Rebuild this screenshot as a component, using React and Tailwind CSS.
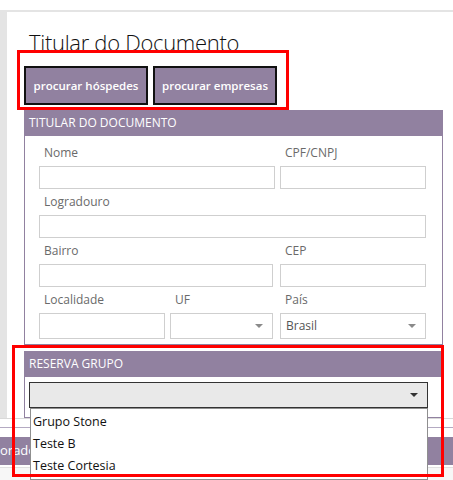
import React from 'react';

const purple = 'bg-[#9181a0]';

function Field({ label, width, children, tall }) {
  return (
    <div className={`flex flex-col ${width}`}>
      <div className="h-[26px] flex items-center pl-[5px] text-[12px] text-[#6a6a6a]">{label}</div>
      <div className={`${tall ? 'h-[26px]' : 'h-[23px]'} border border-[#cfcfcf] bg-white relative flex items-center`}>
        {children}
      </div>
    </div>
  );
}

function Caret({ className }) {
  return (
    <svg width="8" height="4" viewBox="0 0 8 4" className={className}>
      <path d="M0 0 L8 0 L4 4 Z" fill="currentColor" />
    </svg>
  );
}

export default function App() {
  return (
    <div className="w-[453px] h-[480px] bg-white overflow-hidden relative font-['Open_Sans','Noto_Sans',sans-serif]">
      <div className="h-[10px]" />

      {/* modal */}
      <div className="h-[408px] border-t-2 border-[#e4e4e4] flex">
        <div className="w-[7px] bg-[#e4e4e4]" />
        <div className="flex-1 pl-[17px]">
          <h1 className="ml-[5px] mt-[17px] text-[22px] leading-[26px] font-light text-[#111] tracking-[-0.3px]">
            Titular do Documento
          </h1>

          <div className="mt-[11px] flex gap-[5px]">
            <button className={`w-[124px] h-[39px] border-2 border-[#111] ${purple} text-white text-[11.5px] font-semibold`}>
              procurar hóspedes
            </button>
            <button className={`w-[124px] h-[39px] border-2 border-[#111] ${purple} text-white text-[11.5px] font-semibold`}>
              procurar empresas
            </button>
          </div>

          {/* Titular panel */}
          <div className="mt-[5px] w-[419px]">
            <div className={`h-[26px] ${purple} flex items-center pl-[5px] text-[12px] text-white`}>
              TITULAR DO DOCUMENTO
            </div>
            <div className="h-[209px] border-x border-b border-[#9181a0] pl-[14px] pt-[4px]">
              <div className="flex gap-[5px]">
                <Field label="Nome" width="w-[236px]" />
                <Field label="CPF/CNPJ" width="w-[146px]" />
              </div>
              <div className="flex">
                <Field label="Logradouro" width="w-[387px]" />
              </div>
              <div className="flex gap-[7px]">
                <Field label="Bairro" width="w-[234px]" />
                <Field label="CEP" width="w-[146px]" />
              </div>
              <div className="flex">
                <Field label="Localidade" width="w-[126px]" tall />
                <div className="w-[5px]" />
                <Field label="UF" width="w-[103px]" tall>
                  <Caret className="absolute right-[9px] text-[#8a8a8a]" />
                </Field>
                <div className="w-[7px]" />
                <Field label="País" width="w-[146px]" tall>
                  <span className="pl-[5px] text-[12px] text-[#555]">Brasil</span>
                  <Caret className="absolute right-[9px] text-[#8a8a8a]" />
                </Field>
              </div>
            </div>
          </div>

          {/* Reserva grupo panel */}
          <div className="mt-[6px] w-[419px]">
            <div className={`h-[26px] ${purple} flex items-center pl-[5px] text-[12px] text-white`}>
              RESERVA GRUPO
            </div>
            <div className="h-[41px] border-x border-b border-[#9181a0] pl-[4px] pt-[5px]">
              <div className="w-[399px] h-[26px] border border-[#333] bg-[#e9e9e9] flex items-center justify-end pr-[9px]">
                <Caret className="text-[#333]" />
              </div>
            </div>
          </div>
        </div>
      </div>

      {/* page behind the modal */}
      <div className="h-px bg-[#d9d9d9]" />
      <div className="h-[8px]" />
      <div className="h-px bg-[#b4aac2]" />
      <div className="h-[9px]" />
      <div className={`h-[28px] ${purple} flex items-center text-[13px] text-white`}>
        orado
      </div>
      <div className="h-[2px]" />
      <div className="h-px bg-[#e2e2e2]" />
      <div className="h-[12px] bg-[#f7f7f7]" />

      {/* open dropdown list */}
      <div className="absolute left-[30px] top-[408px] w-[398px] h-[72px] bg-white border border-[#8f8f8f] pt-[2px] pl-[2px] text-[12.5px] text-[#111]">
        <div className="h-[22px] flex items-center">Grupo Stone</div>
        <div className="h-[22px] flex items-center">Teste B</div>
        <div className="h-[22px] flex items-center">Teste Cortesia</div>
      </div>

      {/* annotation boxes */}
      <div className="absolute left-[17px] top-[50px] w-[272px] h-[60px] border-[3px] border-[#ff0000]" />
      <div className="absolute left-[12px] top-[345px] w-[432px] h-[132px] border-[3px] border-[#ff0000]" />
    </div>
  );
}
